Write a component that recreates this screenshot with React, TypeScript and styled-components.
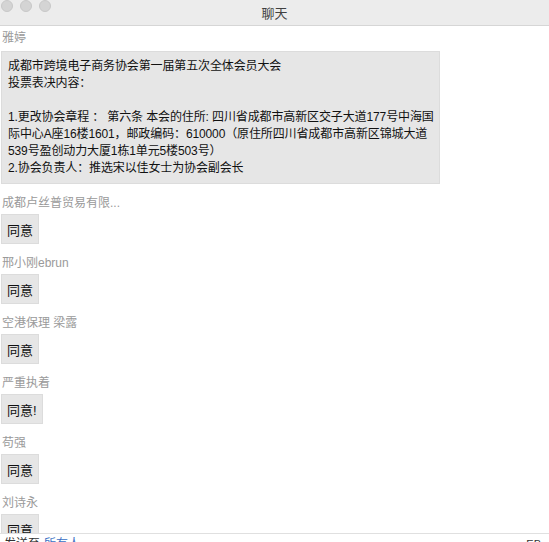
import React from "react";
import styled, { createGlobalStyle } from "styled-components";

const Global = createGlobalStyle`
  html, body { margin: 0; padding: 0; background: #fff; }
  body { font-family: "Liberation Sans", "Noto Sans CJK SC", sans-serif; }
`;

const Window = styled.div`
  width: 549px;
  height: 542px;
  overflow: hidden;
  display: grid;
  grid-template-rows: 26px 507px auto;
  background: #fff;
`;

const TitleBar = styled.div`
  position: relative;
  display: flex;
  align-items: center;
  justify-content: center;
  background: #ececec;
  border-bottom: 1px solid #d6d6d6;
  box-sizing: border-box;
`;

const Lights = styled.div`
  position: absolute;
  left: 1px;
  top: 0;
  display: flex;
  gap: 7px;
`;

const Light = styled.span`
  width: 12px;
  height: 12px;
  border-radius: 50%;
  background: #d4d4d4;
  border: 1px solid #c8c8c8;
  box-sizing: border-box;
`;

const Title = styled.div`
  font-size: 13px;
  color: #404040;
`;

const List = styled.div`
  overflow: hidden;
  display: flex;
  flex-direction: column;
  align-items: flex-start;
  padding: 0 0 0 1px;
  & > * { flex-shrink: 0; }
`;

const Name = styled.div<{ $first?: boolean }>`
  margin-top: ${(p) => (p.$first ? "3px" : "10px")};
  height: 18px;
  line-height: 18px;
  font-size: 12px;
  color: #9a9a9a;
  padding-left: 1px;
`;

const Bubble = styled.div`
  margin-top: 4px;
  width: 439px;
  box-sizing: border-box;
  background: #e6e6e6;
  border: 1px solid #dcdcdc;
  padding: 6px;
  font-size: 12px;
  line-height: 17px;
  letter-spacing: -0.12px;
  color: #111;
  white-space: pre;
  overflow: hidden;
`;

const Reply = styled.div`
  margin-top: 2px;
  height: 30px;
  box-sizing: border-box;
  padding: 0 5px;
  display: flex;
  align-items: center;
  background: #e6e6e6;
  border: 1px solid #dcdcdc;
  font-size: 13px;
  color: #111;
`;

const Footer = styled.div`
  border-top: 1px solid #e0e0e0;
  height: 40px;
  display: flex;
  justify-content: space-between;
  padding: 3px 8px 0 4px;
  font-size: 12px;
  line-height: 14px;
  color: #333;
`;

const Link = styled.span`
  color: #3a6fc4;
  margin-left: 4px;
`;

const Right = styled.span`
  color: #333;
  font-size: 11px;
`;

const text = `成都市跨境电子商务协会第一届第五次全体会员大会
投票表决内容：

1.更改协会章程 ： 第六条 本会的住所: 四川省成都市高新区交子大道177号中海国
际中心A座16楼1601，邮政编码：610000（原住所四川省成都市高新区锦城大道
539号盈创动力大厦1栋1单元5楼503号）
2.协会负责人：推选宋以佳女士为协会副会长`;

const replies = [
  { name: "成都卢丝普贸易有限...", msg: "同意" },
  { name: "邢小刚ebrun", msg: "同意" },
  { name: "空港保理 梁露", msg: "同意" },
  { name: "严重执着", msg: "同意!" },
  { name: "苟强", msg: "同意" },
  { name: "刘诗永", msg: "同意" },
];

export default function App() {
  return (
    <>
      <Global />
      <Window>
        <TitleBar>
          <Lights>
            <Light />
            <Light />
            <Light />
          </Lights>
          <Title>聊天</Title>
        </TitleBar>
        <List>
          <Name $first>雅婷</Name>
          <Bubble>{text}</Bubble>
          {replies.map((r, i) => (
            <React.Fragment key={i}>
              <Name>{r.name}</Name>
              <Reply>{r.msg}</Reply>
            </React.Fragment>
          ))}
        </List>
        <Footer>
          <span>
            发送至<Link>所有人</Link>
          </span>
          <Right>EB</Right>
        </Footer>
      </Window>
    </>
  );
}
